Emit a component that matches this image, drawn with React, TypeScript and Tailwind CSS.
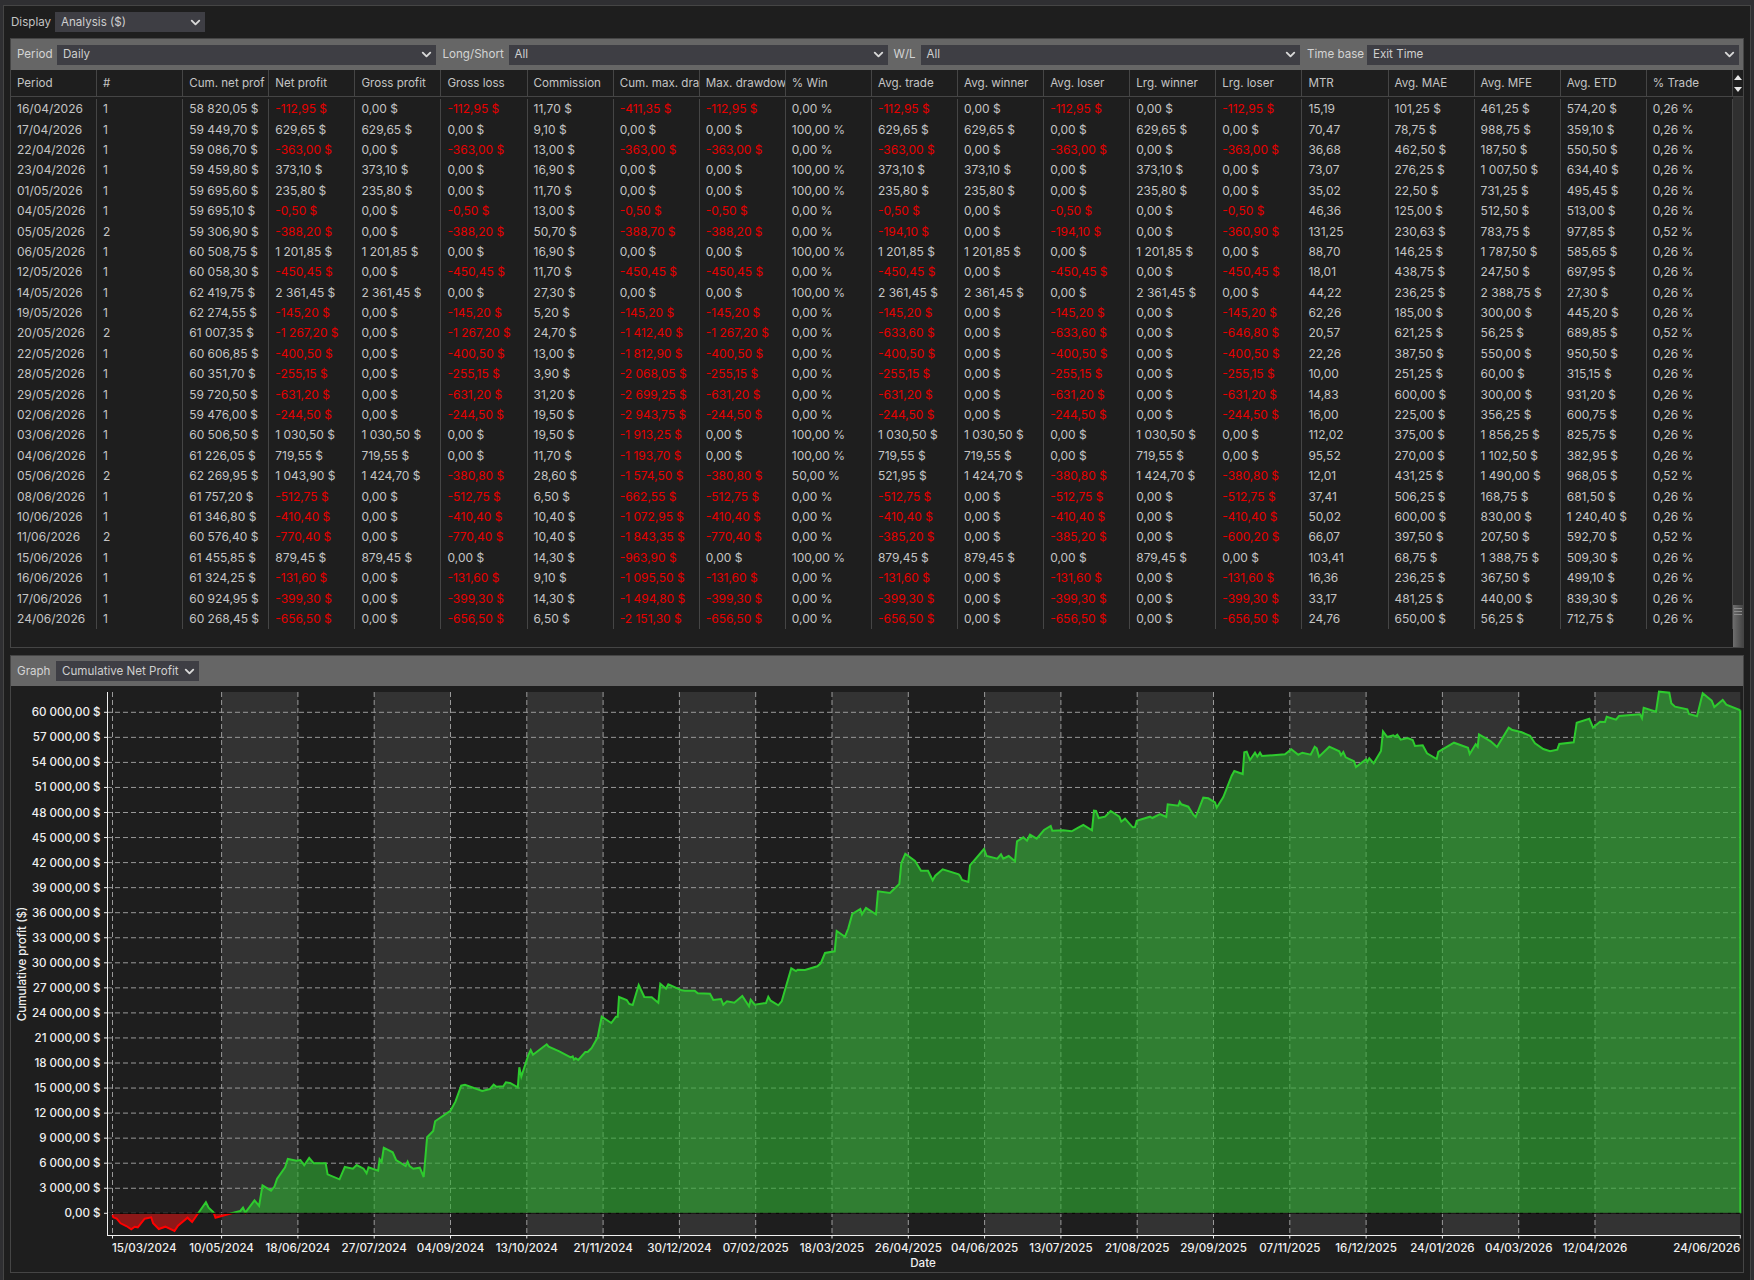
import { ChevronDown } from 'lucide-react'

const headers = ['Period', '#', 'Cum. net prof', 'Net profit', 'Gross profit', 'Gross loss', 'Commission', 'Cum. max. dra', 'Max. drawdow', '% Win', 'Avg. trade', 'Avg. winner', 'Avg. loser', 'Lrg. winner', 'Lrg. loser', 'MTR', 'Avg. MAE', 'Avg. MFE', 'Avg. ETD', '% Trade']

// suffix per column
const suffix = ['', '', ' $', ' $', ' $', ' $', ' $', ' $', ' $', ' %', ' $', ' $', ' $', ' $', ' $', '', ' $', ' $', ' $', ' %']

const raw = `16/04/2026|1|58 820,05|-112,95|0,00|-112,95|11,70|-411,35|-112,95|0,00|-112,95|0,00|-112,95|0,00|-112,95|15,19|101,25|461,25|574,20|0,26
17/04/2026|1|59 449,70|629,65|629,65|0,00|9,10|0,00|0,00|100,00|629,65|629,65|0,00|629,65|0,00|70,47|78,75|988,75|359,10|0,26
22/04/2026|1|59 086,70|-363,00|0,00|-363,00|13,00|-363,00|-363,00|0,00|-363,00|0,00|-363,00|0,00|-363,00|36,68|462,50|187,50|550,50|0,26
23/04/2026|1|59 459,80|373,10|373,10|0,00|16,90|0,00|0,00|100,00|373,10|373,10|0,00|373,10|0,00|73,07|276,25|1 007,50|634,40|0,26
01/05/2026|1|59 695,60|235,80|235,80|0,00|11,70|0,00|0,00|100,00|235,80|235,80|0,00|235,80|0,00|35,02|22,50|731,25|495,45|0,26
04/05/2026|1|59 695,10|-0,50|0,00|-0,50|13,00|-0,50|-0,50|0,00|-0,50|0,00|-0,50|0,00|-0,50|46,36|125,00|512,50|513,00|0,26
05/05/2026|2|59 306,90|-388,20|0,00|-388,20|50,70|-388,70|-388,20|0,00|-194,10|0,00|-194,10|0,00|-360,90|131,25|230,63|783,75|977,85|0,52
06/05/2026|1|60 508,75|1 201,85|1 201,85|0,00|16,90|0,00|0,00|100,00|1 201,85|1 201,85|0,00|1 201,85|0,00|88,70|146,25|1 787,50|585,65|0,26
12/05/2026|1|60 058,30|-450,45|0,00|-450,45|11,70|-450,45|-450,45|0,00|-450,45|0,00|-450,45|0,00|-450,45|18,01|438,75|247,50|697,95|0,26
14/05/2026|1|62 419,75|2 361,45|2 361,45|0,00|27,30|0,00|0,00|100,00|2 361,45|2 361,45|0,00|2 361,45|0,00|44,22|236,25|2 388,75|27,30|0,26
19/05/2026|1|62 274,55|-145,20|0,00|-145,20|5,20|-145,20|-145,20|0,00|-145,20|0,00|-145,20|0,00|-145,20|62,26|185,00|300,00|445,20|0,26
20/05/2026|2|61 007,35|-1 267,20|0,00|-1 267,20|24,70|-1 412,40|-1 267,20|0,00|-633,60|0,00|-633,60|0,00|-646,80|20,57|621,25|56,25|689,85|0,52
22/05/2026|1|60 606,85|-400,50|0,00|-400,50|13,00|-1 812,90|-400,50|0,00|-400,50|0,00|-400,50|0,00|-400,50|22,26|387,50|550,00|950,50|0,26
28/05/2026|1|60 351,70|-255,15|0,00|-255,15|3,90|-2 068,05|-255,15|0,00|-255,15|0,00|-255,15|0,00|-255,15|10,00|251,25|60,00|315,15|0,26
29/05/2026|1|59 720,50|-631,20|0,00|-631,20|31,20|-2 699,25|-631,20|0,00|-631,20|0,00|-631,20|0,00|-631,20|14,83|600,00|300,00|931,20|0,26
02/06/2026|1|59 476,00|-244,50|0,00|-244,50|19,50|-2 943,75|-244,50|0,00|-244,50|0,00|-244,50|0,00|-244,50|16,00|225,00|356,25|600,75|0,26
03/06/2026|1|60 506,50|1 030,50|1 030,50|0,00|19,50|-1 913,25|0,00|100,00|1 030,50|1 030,50|0,00|1 030,50|0,00|112,02|375,00|1 856,25|825,75|0,26
04/06/2026|1|61 226,05|719,55|719,55|0,00|11,70|-1 193,70|0,00|100,00|719,55|719,55|0,00|719,55|0,00|95,52|270,00|1 102,50|382,95|0,26
05/06/2026|2|62 269,95|1 043,90|1 424,70|-380,80|28,60|-1 574,50|-380,80|50,00|521,95|1 424,70|-380,80|1 424,70|-380,80|12,01|431,25|1 490,00|968,05|0,52
08/06/2026|1|61 757,20|-512,75|0,00|-512,75|6,50|-662,55|-512,75|0,00|-512,75|0,00|-512,75|0,00|-512,75|37,41|506,25|168,75|681,50|0,26
10/06/2026|1|61 346,80|-410,40|0,00|-410,40|10,40|-1 072,95|-410,40|0,00|-410,40|0,00|-410,40|0,00|-410,40|50,02|600,00|830,00|1 240,40|0,26
11/06/2026|2|60 576,40|-770,40|0,00|-770,40|10,40|-1 843,35|-770,40|0,00|-385,20|0,00|-385,20|0,00|-600,20|66,07|397,50|207,50|592,70|0,52
15/06/2026|1|61 455,85|879,45|879,45|0,00|14,30|-963,90|0,00|100,00|879,45|879,45|0,00|879,45|0,00|103,41|68,75|1 388,75|509,30|0,26
16/06/2026|1|61 324,25|-131,60|0,00|-131,60|9,10|-1 095,50|-131,60|0,00|-131,60|0,00|-131,60|0,00|-131,60|16,36|236,25|367,50|499,10|0,26
17/06/2026|1|60 924,95|-399,30|0,00|-399,30|14,30|-1 494,80|-399,30|0,00|-399,30|0,00|-399,30|0,00|-399,30|33,17|481,25|440,00|839,30|0,26
24/06/2026|1|60 268,45|-656,50|0,00|-656,50|6,50|-2 151,30|-656,50|0,00|-656,50|0,00|-656,50|0,00|-656,50|24,76|650,00|56,25|712,75|0,26`

const rows = raw.split('\n').map((line) => line.split('|'))

// curve traced piece by piece: offset x, offset y, scale x, points
const pieces: [number, number, number, string][] = [
  [0, 1080, 2.613, '294,405 296,412 305,416 315,430 330,438 343,448 352,440 360,442 378,416 395,412 400,430 415,447 432,440 456,453 465,437 490,413 502,426 518,400 538,367 545,383 558,397 563,413 605,400 628,393 635,383 641,398 665,361 677,378 686,316 708,332 717,320 724,296 745,262 752,237 775,242 785,240 795,256 808,234 820,250 851,250 856,283 887,298 901,261 922,266 932,255 950,266 958,280 963,262 988,272 992,238 997,246 1003,203 1026,217 1035,240 1060,258 1065,245 1070,258 1080,266 1097,263 1107,291 1116,172 1132,153 1137,124 1177,92 1190,65 1205,17 1215,14 1260,33 1280,27 1290,14 1297,20 1315,19 1322,7 1333,9 1353,22'],
  [400, 960, 3, '358,322 364,350 385,285 392,270 399,284 440,253 446,260 478,274 512,292 518,289 522,299 527,295 535,300 556,276 563,276 575,264 593,232 605,170 634,189 648,170 653,170 657,111 680,120 688,132 698,135 716,75 733,111 755,112 775,128 781,71 798,86 805,73 845,91'],
  [680, 820, 3, '15,512 44,512 53,520 90,521 100,540 123,537 130,554 141,544 163,548 187,528 207,559 212,539 224,554 258,549 265,530 272,542 295,556 305,544 334,445 348,453 353,449 375,450 412,439 422,430 435,399 464,394 470,333 495,350 505,325 517,282 541,267 546,283 558,264 588,283 594,214 630,219 658,192 664,130 676,101 705,123 723,152 744,152 758,181 766,167 788,148 836,163'],
  [960, 740, 3, '0,407 6,420 25,426 30,376 72,327 80,348 112,356 123,343 130,356 146,348 165,364 171,304 190,292 201,302 210,284 230,296 252,270 272,258 277,272 310,271 335,274 356,262 370,255 396,271 402,212 408,213 416,234 435,230 452,213 478,230 484,245 495,236 518,262 525,261 530,242 570,230 577,234 600,222 619,231 623,193 655,197 659,185 664,193 685,200 700,224 707,231 730,173 745,175 765,187 770,203 790,171 815,107 823,93 848,102 853,37 860,35 870,60 885,38 892,50 900,38 906,48 975,43 994,28 1015,44 1027,38 1052,44 1064,20 1070,25 1077,50'],
  [1280, 690, 3, '148,170 178,184 183,196 190,186 197,202 222,214 228,231 258,208 262,216 268,205 281,220 303,183 309,124 322,141 340,136 345,140 352,134 362,149 383,144 398,150 405,168 428,166 441,190 470,207 475,186 522,158 564,173 569,192 587,163 593,170 597,133 632,154 651,171 686,113 695,119 725,127 750,137 765,160 790,177 810,184 832,179 838,162 881,157 890,98 928,86 939,113 960,95 975,96 980,80 1008,89 1017,78 1080,73 1086,85 1091,53 1128,65 1137,5 1168,8 1174,40 1185,50 1222,58 1227,72 1251,79 1268,10 1295,32 1303,51 1328,30 1339,44 1381,61'],
]

const curve = pieces.flatMap(([ox, oy, sx, pts]) =>
  pts.split(' ').map((p) => {
    const [x, y] = p.split(',').map(Number)
    return `${(ox + x / sx).toFixed(1)},${(oy + y / 3).toFixed(1)}`
  })
)

const dates = ['10/05/2024', '18/06/2024', '27/07/2024', '04/09/2024', '13/10/2024', '21/11/2024', '30/12/2024', '07/02/2025', '18/03/2025', '26/04/2025', '04/06/2025', '13/07/2025', '21/08/2025', '29/09/2025', '07/11/2025', '16/12/2025', '24/01/2026', '04/03/2026', '12/04/2026']
const tickX = dates.map((_, i) => 221.6 + 76.3 * i)
const values = ['60 000,00 $', '57 000,00 $', '54 000,00 $', '51 000,00 $', '48 000,00 $', '45 000,00 $', '42 000,00 $', '39 000,00 $', '36 000,00 $', '33 000,00 $', '30 000,00 $', '27 000,00 $', '24 000,00 $', '21 000,00 $', '18 000,00 $', '15 000,00 $', '12 000,00 $', '9 000,00 $', '6 000,00 $', '3 000,00 $', '0,00 $']

const zero = 1213.3
const plotRight = 1740.3

function Select({ value, className }: { value: string; className: string }) {
  return (
    <div className={`h-5 flex items-center justify-between pl-[6px] pr-[2px] bg-[#3e3e44] text-[#cfcfcf] ${className}`}>
      <span className="whitespace-nowrap pt-[1px]">{value}</span>
      <ChevronDown className="w-[15px] h-[15px] shrink-0 text-[#d8d8d8]" strokeWidth={3} />
    </div>
  )
}

function Chart() {
  const line = curve.join(' ')
  const area = `${line} ${plotRight},${zero} 112.5,${zero}`
  return (
    <svg viewBox="11 686 1733 586" className="w-[1733px] h-[586px] block">
      <defs>
        <clipPath id="above">
          <rect x="100" y="686" width="1650" height={zero - 686} />
        </clipPath>
        <clipPath id="below">
          <rect x="100" y={zero} width="1650" height="40" />
        </clipPath>
      </defs>

      {/* alternating bands */}
      {tickX.map((x, i) =>
        i % 2 === 0 ? (
          <rect key={x} x={x} y="692" width={i === 18 ? plotRight - x : 76.3} height="543" fill="#333333" />
        ) : null
      )}

      {/* grid */}
      {values.map((_, i) => (
        <line key={i} x1="107" x2={plotRight} y1={712.3 + i * 25.05} y2={712.3 + i * 25.05} stroke="#999999" strokeWidth="1" strokeDasharray="5 3" />
      ))}
      {[112.5, ...tickX].map((x) => (
        <line key={x} x1={x} x2={x} y1="692" y2="1235" stroke="#999999" strokeWidth="1" strokeDasharray="5 3" />
      ))}

      {/* equity curve */}
      <polygon points={area} fill="rgba(46,172,50,0.62)" clipPath="url(#above)" />
      <polygon points={area} fill="rgba(235,20,20,0.55)" clipPath="url(#below)" />
      <polyline points={line} fill="none" stroke="#2ecb2e" strokeWidth="2" clipPath="url(#above)" />
      <polyline points={line} fill="none" stroke="#ff0000" strokeWidth="2" clipPath="url(#below)" />
      <line x1={plotRight} x2={plotRight} y1="710.3" y2={zero} stroke="#2ecb2e" strokeWidth="2" />
      <line x1="107" x2={plotRight} y1={zero} y2={zero} stroke="#000000" strokeWidth="1" />

      {/* axes */}
      <line x1="107.5" x2="107.5" y1="692" y2="1235.5" stroke="#f0f0f0" strokeWidth="1" />
      <line x1="107" x2={plotRight} y1="1235.5" y2="1235.5" stroke="#f0f0f0" strokeWidth="1" />
      {values.map((v, i) => (
        <g key={v}>
          <line x1="104" x2="107" y1={712.3 + i * 25.05} y2={712.3 + i * 25.05} stroke="#f0f0f0" />
          <text x="100.5" y={712.3 + i * 25.05 + 4} textAnchor="end" fontSize="11.6" fontWeight="500" fill="#f0f0f0">{v}</text>
        </g>
      ))}
      {[112.5, ...tickX, plotRight].map((x) => (
        <line key={x} x1={x} x2={x} y1="1235" y2="1238.5" stroke="#f0f0f0" />
      ))}
      <text x="112" y="1251.5" fontSize="11.6" fontWeight="500" fill="#f0f0f0">15/03/2024</text>
      {dates.map((d, i) => (
        <text key={d} x={tickX[i]} y="1251.5" textAnchor="middle" fontSize="11.6" fontWeight="500" fill="#f0f0f0">{d}</text>
      ))}
      <text x={plotRight} y="1251.5" textAnchor="end" fontSize="11.6" fontWeight="500" fill="#f0f0f0">24/06/2026</text>
      <text x="923" y="1267" textAnchor="middle" fontSize="11.6" fontWeight="500" fill="#f0f0f0">Date</text>
      <text transform="translate(26 964) rotate(-90)" textAnchor="middle" fontSize="11.6" fontWeight="500" fill="#f0f0f0">Cumulative profit ($)</text>
    </svg>
  )
}

export default function App() {
  return (
    <div className="w-[1754px] h-[1280px] overflow-hidden bg-[#2f2f32] pt-[5px] px-[3px] font-['Inter',sans-serif] text-[12px] text-[#c4c4c4]">
      <div className="h-[1280px] bg-[#1e1e1e] border border-[#454545] pt-[6px] px-[6px]">
        {/* display */}
        <div className="flex items-center h-5 mb-[6px] text-[11.6px]">
          <span className="w-[45px] pl-[1px] pt-[1px]">Display</span>
          <Select value="Analysis ($)" className="w-[150px]" />
        </div>

        {/* table group */}
        <div className="h-[610px] border border-[#454545] flex flex-col">
          <div className="h-[31px] bg-[#666666] flex items-center pl-[6px] pr-[4px] gap-[6px] text-[11.6px]">
            <span className="w-[34px] pt-[1px] text-[#d4d4d4] whitespace-nowrap">Period</span>
            <Select value="Daily" className="w-[378.5px] mr-[1px]" />
            <span className="w-[60px] pt-[1px] text-[#d4d4d4] whitespace-nowrap">Long/Short</span>
            <Select value="All" className="w-[379px]" />
            <span className="w-[21px] pt-[1px] text-[#d4d4d4] whitespace-nowrap">W/L</span>
            <Select value="All" className="w-[379.5px] mr-[1px]" />
            <span className="w-[54px] pt-[1px] text-[#d4d4d4] whitespace-nowrap">Time base</span>
            <Select value="Exit Time" className="flex-1" />
          </div>

          <div className="flex h-[27px] border-b border-[#454545] text-[11.6px]">
            {headers.map((h) => (
              <div key={h} className="w-[86.1px] shrink-0 border-r border-[#454545] pl-[6px] pt-[2px] flex items-center whitespace-nowrap overflow-hidden">
                {h}
              </div>
            ))}
            <div className="flex-1 flex flex-col items-center justify-center gap-[7px]">
              <svg viewBox="0 0 8 5" className="w-2 h-[5px] shrink-0"><polygon points="4,0 8,5 0,5" fill="#e8e8e8" /></svg>
              <svg viewBox="0 0 8 5" className="w-2 h-[5px] shrink-0"><polygon points="0,0 8,0 4,5" fill="#e8e8e8" /></svg>
            </div>
          </div>

          <div className="flex flex-1 min-h-0">
            <div className="w-[1722px] pt-[2px]">
              {rows.map((row) => (
                <div key={row[0]} className="flex h-[20.4px]">
                  {row.map((cell, c) => (
                    <div key={c} className={`w-[86.1px] shrink-0 border-r border-[#454545] pl-[6px] flex items-center whitespace-nowrap overflow-hidden ${cell.startsWith('-') ? 'text-[#e60000]' : ''}`}>
                      {cell + suffix[c]}
                    </div>
                  ))}
                </div>
              ))}
            </div>
            <div className="flex-1 bg-[#303030] flex flex-col justify-end">
              <div className="h-[42px] bg-gradient-to-r from-[#6e6e6e] to-[#454545] flex flex-col items-center gap-[2px] pt-[3px]">
                <div className="w-2 h-px bg-[#8c8c8c]" />
                <div className="w-2 h-px bg-[#8c8c8c]" />
                <div className="w-2 h-px bg-[#8c8c8c]" />
              </div>
            </div>
          </div>
        </div>

        {/* graph group */}
        <div className="h-[618px] mt-[7px] border border-[#454545]">
          <div className="h-[30px] bg-[#666666] flex items-center pl-[6px] gap-[6px] text-[11.6px]">
            <span className="w-[33px] pt-[1px] text-[#d4d4d4]">Graph</span>
            <Select value="Cumulative Net Profit" className="w-[143px]" />
          </div>
          <Chart />
        </div>
      </div>
    </div>
  )
}
